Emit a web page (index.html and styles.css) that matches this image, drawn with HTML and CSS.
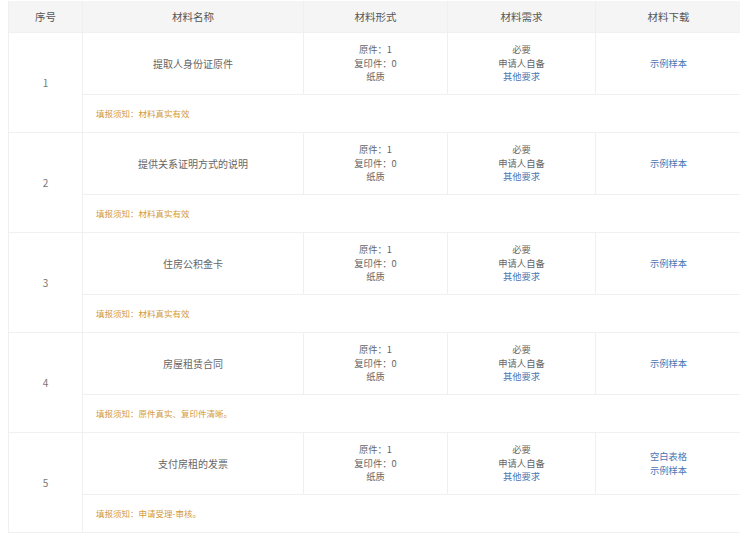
FILE: index.html
```html
<!DOCTYPE html>
<html lang="zh">
<head>
<meta charset="utf-8">
<link rel="stylesheet" href="styles.css">
</head>
<body>
<table class="mat">
  <colgroup>
    <col class="c-num"><col class="c-name"><col class="c-form"><col class="c-req"><col class="c-dl">
  </colgroup>
  <thead>
    <tr><th>序号</th><th>材料名称</th><th>材料形式</th><th>材料需求</th><th>材料下载</th></tr>
  </thead>
  <tbody>
    <tr class="data">
      <td class="num" rowspan="2">1</td>
      <td>提取人身份证原件</td>
      <td class="lines"><div>原件：1</div><div>复印件：0</div><div>纸质</div></td>
      <td class="lines"><div>必要</div><div>申请人自备</div><div><a class="link">其他要求</a></div></td>
      <td class="lines"><div><a class="link">示例样本</a></div></td>
    </tr>
    <tr class="note"><td colspan="4">填报须知：材料真实有效</td></tr>

    <tr class="data">
      <td class="num" rowspan="2">2</td>
      <td>提供关系证明方式的说明</td>
      <td class="lines"><div>原件：1</div><div>复印件：0</div><div>纸质</div></td>
      <td class="lines"><div>必要</div><div>申请人自备</div><div><a class="link">其他要求</a></div></td>
      <td class="lines"><div><a class="link">示例样本</a></div></td>
    </tr>
    <tr class="note"><td colspan="4">填报须知：材料真实有效</td></tr>

    <tr class="data">
      <td class="num" rowspan="2">3</td>
      <td>住房公积金卡</td>
      <td class="lines"><div>原件：1</div><div>复印件：0</div><div>纸质</div></td>
      <td class="lines"><div>必要</div><div>申请人自备</div><div><a class="link">其他要求</a></div></td>
      <td class="lines"><div><a class="link">示例样本</a></div></td>
    </tr>
    <tr class="note"><td colspan="4">填报须知：材料真实有效</td></tr>

    <tr class="data">
      <td class="num" rowspan="2">4</td>
      <td>房屋租赁合同</td>
      <td class="lines"><div>原件：1</div><div>复印件：0</div><div>纸质</div></td>
      <td class="lines"><div>必要</div><div>申请人自备</div><div><a class="link">其他要求</a></div></td>
      <td class="lines"><div><a class="link">示例样本</a></div></td>
    </tr>
    <tr class="note"><td colspan="4">填报须知：原件真实、复印件清晰。</td></tr>

    <tr class="data">
      <td class="num" rowspan="2">5</td>
      <td>支付房租的发票</td>
      <td class="lines"><div>原件：1</div><div>复印件：0</div><div>纸质</div></td>
      <td class="lines"><div>必要</div><div>申请人自备</div><div><a class="link">其他要求</a></div></td>
      <td class="lines"><div><a class="link">空白表格</a></div><div><a class="link">示例样本</a></div></td>
    </tr>
    <tr class="note"><td colspan="4">填报须知：申请受理-审核。</td></tr>
  </tbody>
</table>
</body>
</html>
```
FILE: styles.css
```css
html, body {
  margin: 0;
  padding: 0;
  background: #fff;
}
body {
  font-family: "Noto Sans CJK SC", "Noto Sans", sans-serif;
  color: #666;
  font-size: 10px;
}
.mat {
  margin: 1px 0 0 8px;
  width: 733px;
  border-collapse: collapse;
  table-layout: fixed;
}
.c-num { width: 74px; }
.c-name { width: 221px; }
.c-form { width: 144px; }
.c-req { width: 148px; }
.c-dl { width: 146px; }

.mat th {
  height: 31px;
  padding: 0;
  background: #f5f5f5;
  font-weight: normal;
  font-size: 10.5px;
  color: #555;
  text-align: center;
  vertical-align: middle;
  border-left: 1px solid #efefef;
  border-right: 1px solid #efefef;
}
.mat td {
  padding: 0;
  text-align: center;
  vertical-align: middle;
  border: 1px solid #f0f0f0;
  line-height: 13px;
}
.data td {
  height: 61px;
}
.num {
  font-size: 10px;
  color: #777;
}
.lines div {
  font-size: 9.3px;
  height: 13.5px;
  line-height: 13.5px;
}
.link {
  color: #4a77b4;
  text-decoration: none;
}
.note td {
  height: 37px;
  text-align: left;
  padding-left: 13px;
  font-size: 8.5px;
  color: #d49a3a;
}
```
